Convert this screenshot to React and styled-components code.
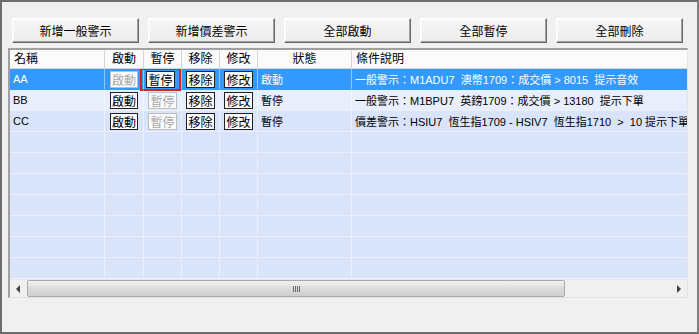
import React from 'react';
import styled, { createGlobalStyle } from 'styled-components';

const GlobalStyle = createGlobalStyle`
  html, body {
    margin: 0;
    padding: 0;
    background: #f0f0f0;
  }
  body {
    font-family: "Liberation Sans", "Noto Sans CJK TC", sans-serif;
    font-size: 12px;
  }
`;

const COLUMNS = [
  { key: 'name', label: '名稱', width: 95, align: 'left' },
  { key: 'start', label: '啟動', width: 39, align: 'center' },
  { key: 'pause', label: '暫停', width: 38, align: 'center' },
  { key: 'remove', label: '移除', width: 38, align: 'center' },
  { key: 'edit', label: '修改', width: 38, align: 'center' },
  { key: 'status', label: '狀態', width: 94, align: 'center' },
  { key: 'desc', label: '條件說明', width: 420, align: 'left' },
];

const ROWS = [
  {
    name: 'AA',
    startOn: false,
    pauseOn: true,
    status: '啟動',
    desc: '一般警示：M1ADU7  澳幣1709：成交價 > 8015  提示音效',
    selected: true,
  },
  {
    name: 'BB',
    startOn: true,
    pauseOn: false,
    status: '暫停',
    desc: '一般警示：M1BPU7  英鎊1709：成交價 > 13180  提示下單',
    light: true,
  },
  {
    name: 'CC',
    startOn: true,
    pauseOn: false,
    status: '暫停',
    desc: '價差警示：HSIU7  恆生指1709 - HSIV7  恆生指1710  >  10 提示下單',
  },
];

const TOOLBAR = ['新增一般警示', '新增價差警示', '全部啟動', '全部暫停', '全部刪除'];

function CellButton({ on, focused, children }) {
  return (
    <FocusRing $focused={focused}>
      <SmallButton $on={on}>{children}</SmallButton>
    </FocusRing>
  );
}

function App() {
  return (
    <>
      <GlobalStyle />
      <Window>
        <Toolbar>
          {TOOLBAR.map((t) => (
            <ToolButton key={t}>{t}</ToolButton>
          ))}
        </Toolbar>
        <ListView>
          <Header>
            {COLUMNS.map((c) => (
              <HeadCell key={c.key} $w={c.width} $align={c.align}>
                {c.label}
              </HeadCell>
            ))}
          </Header>
          <Body>
            {ROWS.map((r) => (
              <Row key={r.name} $selected={r.selected} $light={r.light}>
                <Cell $w={95}>{r.name}</Cell>
                <Cell $w={39} $center>
                  <CellButton on={r.startOn}>啟動</CellButton>
                </Cell>
                <Cell $w={38} $center>
                  <CellButton on={r.pauseOn} focused={r.selected}>暫停</CellButton>
                </Cell>
                <Cell $w={38} $center>
                  <CellButton on>移除</CellButton>
                </Cell>
                <Cell $w={38} $center>
                  <CellButton on>修改</CellButton>
                </Cell>
                <Cell $w={94}>{r.status}</Cell>
                <Cell $w={420}>{r.desc}</Cell>
              </Row>
            ))}
            {Array.from({ length: 8 }).map((_, i) => (
              <Row key={i}>
                {COLUMNS.map((c) => (
                  <Cell key={c.key} $w={c.width} />
                ))}
              </Row>
            ))}
          </Body>
          <HScroll>
            <ArrowBox>
              <svg width="5" height="8" viewBox="0 0 5 8">
                <path d="M4 0 L0 4 L4 8 Z" fill="#404040" />
              </svg>
            </ArrowBox>
            <Track>
              <Thumb>
                <Grip>
                  <span />
                  <span />
                  <span />
                  <span />
                </Grip>
              </Thumb>
            </Track>
            <ArrowBox>
              <svg width="5" height="8" viewBox="0 0 5 8">
                <path d="M1 0 L5 4 L1 8 Z" fill="#404040" />
              </svg>
            </ArrowBox>
          </HScroll>
        </ListView>
      </Window>
    </>
  );
}

export default App;

const Window = styled.div`
  box-sizing: border-box;
  width: 699px;
  height: 334px;
  border: 2px solid #6e6e6e;
  border-right-color: #808080;
  background: #f0f0f0;
  display: flex;
  flex-direction: column;
  padding: 16px 9px 0 6px;
`;

const Toolbar = styled.div`
  display: flex;
  gap: 9px;
  padding-left: 4px;
`;

const ToolButton = styled.button`
  width: 127px;
  height: 25px;
  padding: 0;
  font-family: "Liberation Sans", "Noto Sans CJK TC", sans-serif;
  font-size: 12px;
  color: #000;
  background: linear-gradient(#f6f6f6, #ececec);
  border: 1px solid;
  border-color: #ffffff #6a6a6a #6a6a6a #ffffff;
  box-shadow: inset -1px -1px 0 #a0a0a0, inset 1px 1px 0 #f8f8f8;
`;

const ListView = styled.div`
  margin-top: 5px;
  width: 680px;
  height: 250px;
  box-sizing: border-box;
  border-top: 2px solid #a0a0a0;
  border-left: 2px solid #a0a0a0;
  border-right: 1px solid #e3e3e3;
  border-bottom: 1px solid #e3e3e3;
  display: flex;
  flex-direction: column;
  overflow: hidden;
  background: #dae5fb;
`;

const Header = styled.div`
  display: flex;
  height: 18px;
  flex-shrink: 0;
  background: #fbfbfb;
  border-bottom: 1px solid #d5d5d5;
`;

const HeadCell = styled.div`
  box-sizing: border-box;
  width: ${(p) => p.$w}px;
  flex-shrink: 0;
  padding: 0 4px;
  line-height: 18px;
  text-align: ${(p) => p.$align};
  border-right: 1px solid #d5d5d5;
  color: #000;
  white-space: nowrap;
`;

const Body = styled.div`
  flex: 1;
  overflow: hidden;
`;

const Row = styled.div`
  display: flex;
  height: 21px;
  box-sizing: border-box;
  border-bottom: 1px solid ${(p) => (p.$selected ? '#3399ff' : '#eaf0fd')};
  background: ${(p) => (p.$selected ? '#3399ff' : p.$light ? '#e8eefb' : '#d9e4fa')};
  color: ${(p) => (p.$selected ? '#fff' : '#000')};
`;

const Cell = styled.div`
  box-sizing: border-box;
  width: ${(p) => p.$w}px;
  flex-shrink: 0;
  display: flex;
  align-items: center;
  justify-content: ${(p) => (p.$center ? 'center' : 'flex-start')};
  padding: 0 ${(p) => (p.$center ? 0 : 3)}px;
  border-right: 1px solid rgba(255, 255, 255, 0.45);
  white-space: pre;
  overflow: visible;
  font-size: 11px;
  font-family: "Liberation Sans", "Noto Sans CJK TC", sans-serif;
`;

const FocusRing = styled.div`
  box-sizing: border-box;
  flex-shrink: 0;
  display: flex;
  align-items: center;
  justify-content: center;
  height: ${(p) => (p.$focused ? 23 : 21)}px;
  width: ${(p) => (p.$focused ? '41px' : 'auto')};
  margin-left: ${(p) => (p.$focused ? '-4px' : '0')};
  padding: 0 2px;
  border: 2px solid ${(p) => (p.$focused ? '#e02020' : 'transparent')};
`;

const SmallButton = styled.div`
  box-sizing: border-box;
  height: 17px;
  padding: 0 1px;
  line-height: 15px;
  font-size: 12px;
  font-family: "Noto Sans CJK TC", sans-serif;
  background: #fbfbfb;
  color: ${(p) => (p.$on ? '#000' : '#a8a8a8')};
  border: 1px solid ${(p) => (p.$on ? '#202020' : '#bdbdbd')};
`;

const HScroll = styled.div`
  display: flex;
  height: 17px;
  flex-shrink: 0;
  background: #f0f0f0;
  border-top: 1px solid #e6e6e6;
`;

const ArrowBox = styled.div`
  width: 17px;
  display: flex;
  align-items: center;
  justify-content: center;
  flex-shrink: 0;
`;

const Track = styled.div`
  flex: 1;
  display: flex;
  background: #f0f0f0;
`;

const Thumb = styled.div`
  width: 538px;
  box-sizing: border-box;
  border: 1px solid #a8a8a8;
  border-radius: 2px;
  background: linear-gradient(#f2f2f2, #dcdcdc 50%, #cfcfcf);
  display: flex;
  align-items: center;
  justify-content: center;
`;

const Grip = styled.div`
  display: flex;
  gap: 1px;
  span {
    width: 1px;
    height: 6px;
    background: #6a6a6a;
  }
`;
